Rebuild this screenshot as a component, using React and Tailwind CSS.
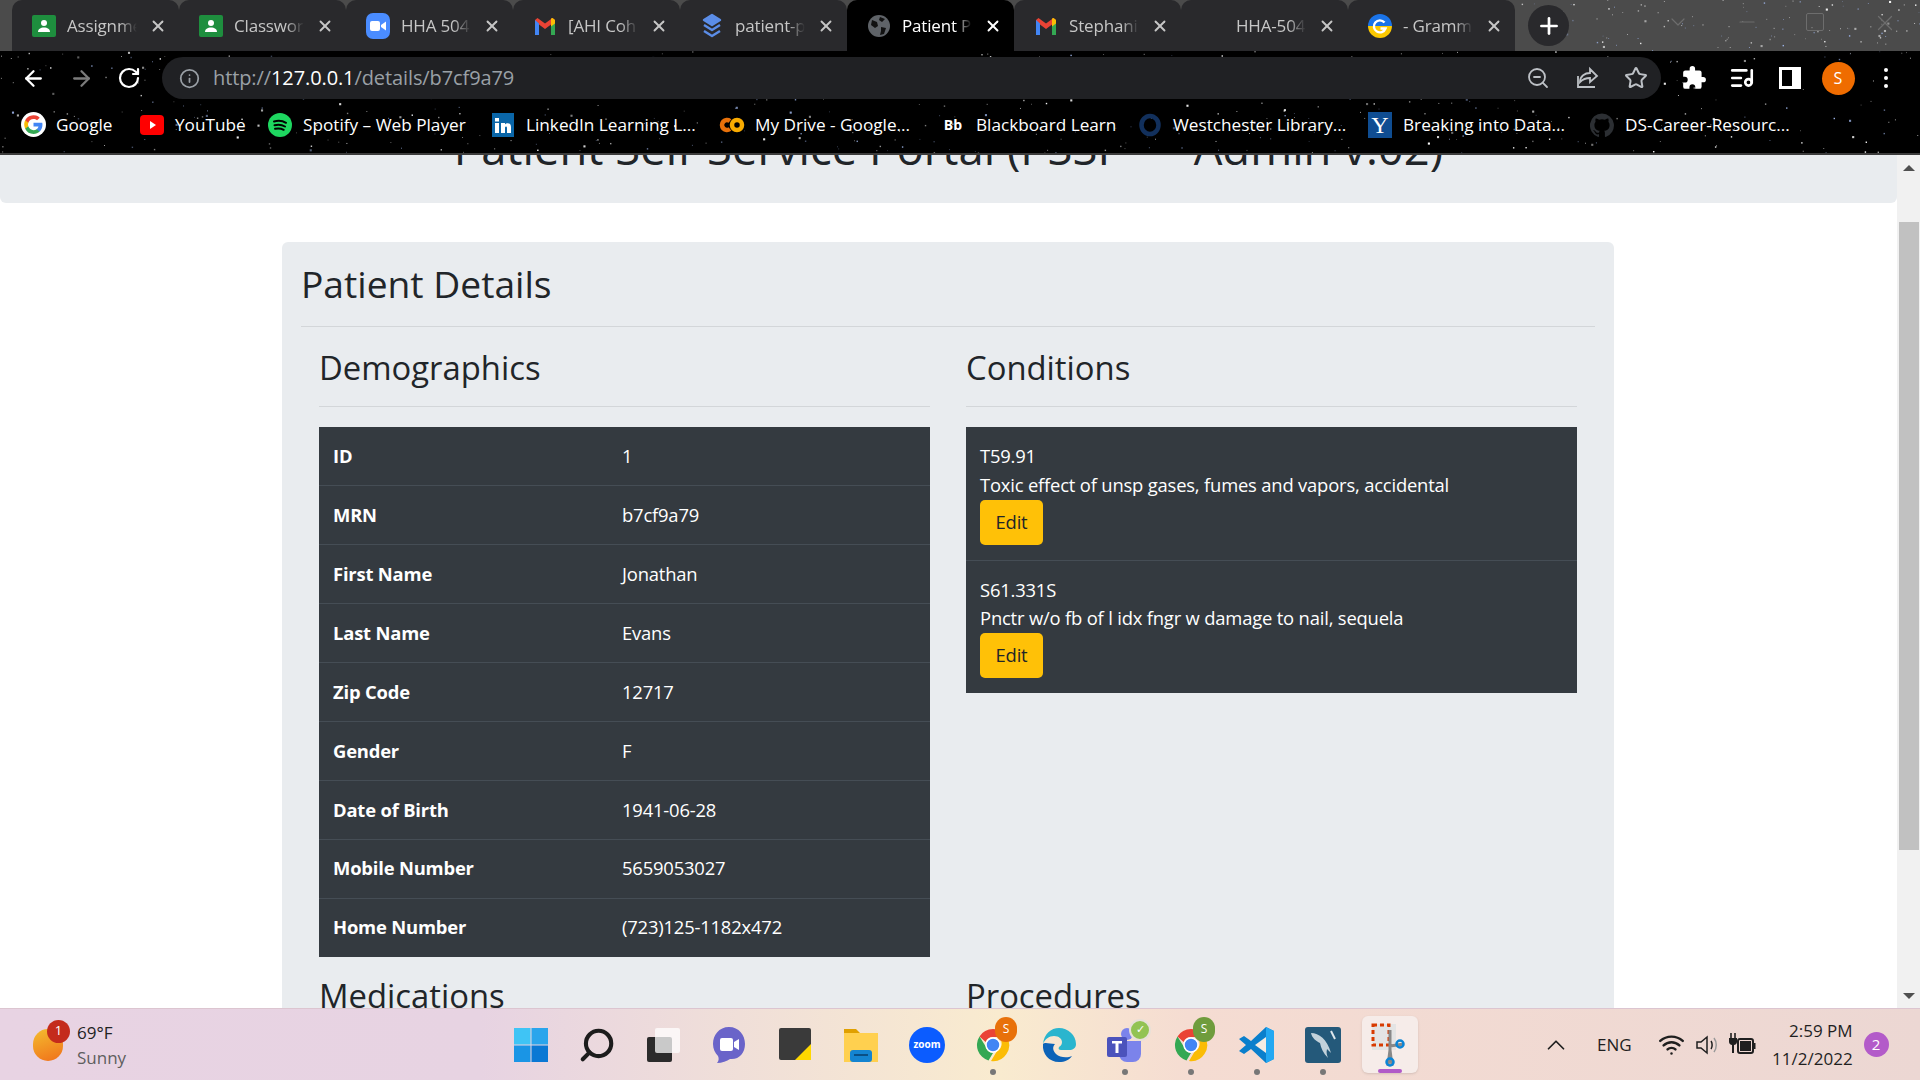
import React from "react";
import { ArrowLeft, ArrowRight, RotateCw, Info, ZoomOut, Star, ListMusic, Plus, X, Minus, ChevronDown, ChevronUp, Search, Wifi } from "lucide-react";

// seeded so the star field is the same on each render
const makeStars = (count, seed, w, h) => {
  let s = seed;
  const next = () => {
    s = (s * 16807) % 2147483647;
    return s / 2147483647;
  };
  const stars = [];
  for (let i = 0; i < count; i++) {
    const x = next() * w;
    const y = next() * h;
    const big = next();
    stars.push({ x, y, r: big > 0.9 ? 1.5 : big > 0.6 ? 1 : 0.6, o: 0.35 + next() * 0.65 });
  }
  return stars;
};

const Stars = ({ count, seed, w, h, className }) => (
  <svg className={className} width={w} height={h} viewBox={`0 0 ${w} ${h}`}>
    {makeStars(count, seed, w, h).map((st, i) => (
      <rect key={i} x={st.x} y={st.y} width={st.r * 1.4} height={st.r * 1.4} fill={i % 3 === 0 ? "#9db4e8" : "#ffffff"} opacity={st.o} />
    ))}
  </svg>
);

const GoogleG = ({ size = 24 }) => (
  <svg width={size} height={size} viewBox="0 0 24 24">
    <circle cx="12" cy="12" r="12" fill="#fff" />
    <path d="M20.6 12.2c0-.6-.1-1.2-.2-1.8H12v3.4h4.8a4.1 4.1 0 0 1-1.8 2.7v2.2h2.9c1.7-1.6 2.7-3.800 2.700-6.500z" fill="#4285F4" />
    <path d="M12 21c2.400 0 4.400-.8 5.900-2.200L15 16.500c-.8.500-1.800.9-3 .9-2.300 0-4.300-1.600-5-3.700H4v2.300A9 9 0 0 0 12 21z" fill="#34A853" />
    <path d="M7 13.700a5.400 5.400 0 0 1 0-3.400V8H4a9 9 0 0 0 0 8z" fill="#FBBC05" />
    <path d="M12 6.600c1.300 0 2.500.5 3.400 1.300L18 5.400A9 9 0 0 0 4 8l3 2.300c.7-2.100 2.700-3.700 5-3.700z" fill="#EA4335" />
  </svg>
);

const Classroom = () => (
  <svg width="24" height="24" viewBox="0 0 24 24">
    <rect x="0" y="1" width="24" height="22" rx="2" fill="#1e8e3e" />
    <circle cx="12" cy="9" r="3" fill="#fff" />
    <path d="M6 18c0-3 2.500-4.500 6-4.500s6 1.500 6 4.500z" fill="#fff" />
  </svg>
);

const ZoomTab = () => (
  <svg width="24" height="28" viewBox="0 0 24 28">
    <rect x="0" y="1" width="24" height="26" rx="7" fill="#4a8cff" />
    <rect x="4" y="9" width="10" height="10" rx="2" fill="#fff" />
    <path d="M15 13l5-3.500v9L15 15z" fill="#fff" />
  </svg>
);

const Gmail = () => (
  <svg width="24" height="24" viewBox="0 0 24 24">
    <path d="M2 21h4V10.500L12 15l6-4.500V21h4V6l-2.500-2L12 9.500 4.500 4 2 6z" fill="#EA4335" />
    <path d="M2 6v15h4V9.500z" fill="#4285F4" />
    <path d="M22 6v15h-4V9.500z" fill="#34A853" />
    <path d="M18 4.500L19.500 4 22 6v3.500l-4 3z" fill="#FBBC05" />
  </svg>
);

const Layers = () => (
  <svg width="20" height="26" viewBox="0 0 20 26" fill="none" stroke="#5b8de8" strokeWidth="2.400" strokeLinejoin="round">
    <path d="M10 2l8 5-8 5-8-5z" fill="#5b8de8" />
    <path d="M2 12l8 5 8-5" />
    <path d="M2 18l8 5 8-5" />
  </svg>
);

const Globe = () => (
  <svg width="24" height="24" viewBox="0 0 24 24">
    <circle cx="12" cy="12" r="11" fill="#5f6368" />
    <path d="M5 6l5 2 1 4-3 2-4-3zM14 13l5 1-2 6-4 1 1-4zM13 3l5 2-3 3-3-2z" fill="#111" />
  </svg>
);

const GrammarlyG = () => (
  <svg width="24" height="24" viewBox="0 0 24 24">
    <path d="M0 12a12 12 0 0 1 24 0z" fill="#1a73e8" />
    <path d="M0 12a12 12 0 0 0 24 0z" fill="#fbc800" />
    <path d="M16.500 8.500a6 6 0 1 0 1 6H12.500" fill="none" stroke="#fff" strokeWidth="2.400" />
  </svg>
);

const tabs = [
  { title: "Assignme", icon: <Classroom /> },
  { title: "Classwork", icon: <Classroom /> },
  { title: "HHA 504", icon: <ZoomTab /> },
  { title: "[AHI Coh", icon: <Gmail /> },
  { title: "patient-p", icon: <Layers /> },
  { title: "Patient P", icon: <Globe />, active: true },
  { title: "Stephani", icon: <Gmail /> },
  { title: "HHA-504", icon: <span className="block h-6 w-6" /> },
  { title: "- Gramm", icon: <GrammarlyG /> },
];

const Tab = ({ title, icon, active }) => (
  <div className={`flex h-[51px] w-[167px] shrink-0 items-center rounded-t-[10px] pl-[20px] pr-[12px] ${active ? "bg-black text-white" : "bg-[#29292c] text-[#c6c6c6]"}`}>
    <span className="flex w-6 shrink-0 justify-center">{icon}</span>
    <span className="ml-[11px] w-[70px] overflow-hidden whitespace-nowrap text-[17px] tracking-[-0.01em] [mask-image:linear-gradient(to_right,black_75%,transparent)]">{title}</span>
    <X className="ml-auto" size={18} strokeWidth={2.5} />
  </div>
);

const bookmarks = [
  { label: "Google", w: "w-[119px]", icon: <GoogleG size={25} /> },
  {
    label: "YouTube",
    w: "w-[128px]",
    icon: (
      <svg width="24" height="24" viewBox="0 0 24 24">
        <rect y="2" width="24" height="20" rx="4" fill="#f00" />
        <path d="M10 8l6 4-6 4z" fill="#fff" />
      </svg>
    ),
  },
  {
    label: "Spotify – Web Player",
    w: "w-[223px]",
    icon: (
      <svg width="24" height="24" viewBox="0 0 24 24" fill="none">
        <circle cx="12" cy="12" r="12" fill="#1ed760" />
        <path d="M6 8.500c4-1 8.500-.8 12 1.300M6.500 12.300c3.500-.8 7.300-.6 10.500 1.200M7 15.800c3-.6 6-.5 8.700 1" stroke="#000" strokeWidth="2" strokeLinecap="round" />
      </svg>
    ),
  },
  {
    label: "LinkedIn Learning L...",
    w: "w-[229px]",
    icon: (
      <svg width="22" height="24" viewBox="0 0 22 24">
        <rect width="22" height="24" fill="#0a66a8" />
        <rect x="3" y="10" width="4" height="10" fill="#fff" />
        <rect x="3" y="5" width="4" height="3.500" fill="#fff" />
        <path d="M9 10h4v1.500c1-1.500 6-2.500 6 2.500v6h-4v-5c0-2-2-2-2 0v5H9z" fill="#fff" />
      </svg>
    ),
  },
  {
    label: "My Drive - Google...",
    w: "w-[221px]",
    icon: (
      <svg width="26" height="24" viewBox="0 0 26 24" fill="none" stroke="#f9ab00" strokeWidth="4.500">
        <path d="M11 8a5 5 0 1 0 0 8" stroke="#e8710a" />
        <circle cx="18" cy="12" r="5" />
      </svg>
    ),
  },
  { label: "Blackboard Learn", w: "w-[197px]", icon: <span className="block w-6 text-center text-[14px] font-bold text-white">Bb</span> },
  {
    label: "Westchester Library...",
    w: "w-[230px]",
    icon: (
      <svg width="24" height="24" viewBox="0 0 24 24" fill="none">
        <ellipse cx="12" cy="12" rx="8.500" ry="9" stroke="#12305c" strokeWidth="4.500" />
      </svg>
    ),
  },
  {
    label: "Breaking into Data...",
    w: "w-[222px]",
    icon: (
      <span className="block h-[26px] w-6 bg-[#0f4d92] text-center font-['Liberation_Serif',serif] text-[24px] leading-[26px] text-white">Y</span>
    ),
  },
  {
    label: "DS-Career-Resourc...",
    w: "w-[230px]",
    icon: (
      <svg width="24" height="24" viewBox="0 0 24 24">
        <path d="M12 .5a12 12 0 0 0-3.800 23.400c.6.100.8-.3.800-.6v-2c-3.300.7-4-1.600-4-1.600-.5-1.400-1.300-1.800-1.300-1.800-1.100-.7.100-.7.100-.7 1.200.1 1.800 1.200 1.800 1.200 1.100 1.800 2.800 1.300 3.500 1 .1-.8.400-1.300.8-1.600-2.700-.3-5.500-1.300-5.500-5.900 0-1.300.5-2.400 1.200-3.200-.1-.3-.5-1.500.1-3.200 0 0 1-.3 3.300 1.200a11.500 11.500 0 0 1 6 0c2.300-1.500 3.300-1.200 3.300-1.200.6 1.700.2 2.900.1 3.200.8.800 1.200 1.900 1.200 3.200 0 4.600-2.800 5.600-5.500 5.900.4.400.8 1.100.8 2.200v3.300c0 .3.200.7.800.6A12 12 0 0 0 12 .5z" fill="#2c2f33" />
      </svg>
    ),
  },
];

const demographics = [
  ["ID", "1"],
  ["MRN", "b7cf9a79"],
  ["First Name", "Jonathan"],
  ["Last Name", "Evans"],
  ["Zip Code", "12717"],
  ["Gender", "F"],
  ["Date of Birth", "1941-06-28"],
  ["Mobile Number", "5659053027"],
  ["Home Number", "(723)125-1182x472"],
];

const conditions = [
  ["T59.91", "Toxic effect of unsp gases, fumes and vapors, accidental"],
  ["S61.331S", "Pnctr w/o fb of l idx fngr w damage to nail, sequela"],
];

const ChromeIcon = ({ badge, badgeColor }) => (
  <span className="relative block h-9 w-9">
    <svg width="36" height="36" viewBox="0 0 36 36">
      <path d="M18 2a16 16 0 0 1 13.900 8H18a8 8 0 0 0-7.400 5L4.500 9.500A16 16 0 0 1 18 2z" fill="#EA4335" />
      <path d="M4.500 9.500L11 20a8 8 0 0 0 7 6l-4.500 7.500A16 16 0 0 1 4.500 9.500z" fill="#34A853" />
      <path d="M31.900 10A16 16 0 0 1 16 34l6-10a8 8 0 0 0 1-14z" fill="#FBBC05" />
      <circle cx="18" cy="18" r="7" fill="#4285F4" stroke="#fff" strokeWidth="1.500" />
    </svg>
    <span className={`absolute -right-[6px] -top-[10px] flex h-[25px] w-[22px] items-center justify-center rounded-full text-[12px] text-white ${badgeColor}`}>{badge}</span>
  </span>
);

const taskIcons = [
  {
    key: "start",
    icon: (
      <svg width="36" height="36" viewBox="0 0 36 36">
        <rect x="1" y="1" width="16.500" height="16.500" fill="#3fc4f5" />
        <rect x="18.500" y="1" width="16.500" height="16.500" fill="#2aa5ec" />
        <rect x="1" y="18.500" width="16.500" height="16.500" fill="#1a95e5" />
        <rect x="18.500" y="18.500" width="16.500" height="16.500" fill="#0a78d4" />
      </svg>
    ),
  },
  { key: "search", icon: <Search className="-scale-x-100" size={38} strokeWidth={2.6} color="#1c1c1c" /> },
  {
    key: "view",
    icon: (
      <svg width="36" height="36" viewBox="0 0 36 36">
        <rect x="2" y="10" width="25" height="25" rx="2" fill="#2b2b2b" />
        <rect x="10" y="1" width="25" height="25" rx="2" fill="#fff" opacity="0.75" />
      </svg>
    ),
  },
  {
    key: "chat",
    icon: (
      <svg width="36" height="38" viewBox="0 0 36 38">
        <path d="M18 1c10 0 16 8 16 17s-6 16-15 15c-3 2-8 4-13 4 2-2 2-5 1-7-3-3-5-7-5-12C2 9 8 1 18 1z" fill="#6a64c9" />
        <rect x="9" y="12" width="13" height="13" rx="2" fill="#fff" />
        <path d="M23 16l5-3v11l-5-3z" fill="#fff" />
      </svg>
    ),
  },
  {
    key: "notes",
    icon: (
      <svg width="32" height="34" viewBox="0 0 32 34">
        <rect width="32" height="32" rx="2" fill="#3a3a3a" />
        <path d="M32 16v16H16z" fill="#ffd800" />
      </svg>
    ),
  },
  {
    key: "files",
    icon: (
      <svg width="36" height="36" viewBox="0 0 36 36">
        <path d="M1 2h12l4 4h18v4H1z" fill="#e0a000" />
        <rect x="1" y="6" width="34" height="29" fill="#ffd04f" />
        <rect x="7" y="23" width="22" height="12" rx="3" fill="#1484d1" />
        <rect x="11" y="27" width="14" height="2" fill="#0a4f85" />
      </svg>
    ),
  },
  {
    key: "zoom",
    icon: (
      <span className="flex h-9 w-9 items-center justify-center rounded-full bg-[#0b5cff] text-[10px] font-bold text-white">zoom</span>
    ),
  },
  { key: "chrome1", icon: <ChromeIcon badge="S" badgeColor="bg-[#e8710a]" />, dot: true },
  {
    key: "edge",
    icon: (
      <svg width="36" height="36" viewBox="0 0 36 36">
        <path d="M2 17C3 7 10 1 18 1c9 0 17 7 17 16 0 4-3 6-7 6h-8c-2 0-3-1-2-3 2-1 3-3 3-5 0-3-3-6-8-6S4 12 2 17z" fill="#2ab5ce" />
        <path d="M2 17c-1 10 6 18 16 18 6 0 10-2 13-6-4 2-12 2-16-2-3-3-4-7-1-10-5 0-10-2-12 0z" fill="#0c63b8" />
      </svg>
    ),
  },
  {
    key: "teams",
    icon: (
      <span className="relative block h-9 w-9">
        <svg width="36" height="36" viewBox="0 0 36 36">
          <circle cx="20" cy="7" r="6" fill="#7b83eb" />
          <path d="M12 14h22v13a8 8 0 0 1-8 8h-6a8 8 0 0 1-8-8z" fill="#7b83eb" />
          <rect x="0" y="10" width="20" height="20" rx="2" fill="#4b53bc" />
          <path d="M5 14h10v2.500h-3.500V26h-3v-9.500H5z" fill="#fff" />
        </svg>
        <span className="absolute -right-[8px] -top-[8px] flex h-[22px] w-[22px] items-center justify-center rounded-full border-2 border-[#e8e0d8] bg-[#92c353] text-[11px] text-white">✓</span>
      </span>
    ),
    dot: true,
  },
  { key: "chrome2", icon: <ChromeIcon badge="S" badgeColor="bg-[#6f9c3d]" />, dot: true },
  {
    key: "vscode",
    icon: (
      <svg width="36" height="38" viewBox="0 0 36 38">
        <path d="M27 1l8 4v28l-8 4-15-14-7 5-5-3 7-6-7-6 5-3 7 5z" fill="#0a7fcc" />
        <path d="M27 1l8 4v28l-8 4z" fill="#23a8f2" />
        <path d="M27 11L16 19l11 8z" fill="#f4ece3" />
      </svg>
    ),
    dot: true,
  },
  {
    key: "mysql",
    icon: (
      <svg width="36" height="36" viewBox="0 0 36 36">
        <rect width="36" height="36" rx="3" fill="#24597a" />
        <path d="M6 6c8 0 16 6 20 20l-4-4c-1 4 0 6 1 9-5-5-7-10-8-15C11 14 7 11 6 6z" fill="#dfe7ec" opacity="0.85" />
        <path d="M26 4l4 8" stroke="#dfe7ec" strokeWidth="2" />
      </svg>
    ),
    dot: true,
  },
];

const App = () => {
  return (
    <div className="flex h-screen w-[1920px] flex-col overflow-hidden bg-white font-['Open_Sans',sans-serif] text-[#212529]">
      {/* browser chrome */}
      <div className="relative h-[51px] shrink-0 bg-[#4b4b4b]">
        <Stars className="absolute left-[1500px] top-0" count={120} seed={71} w={420} h={51} />
        <div className="relative flex items-end pl-[12px]">
          {tabs.map((t) => (
            <Tab key={t.title} {...t} />
          ))}
          <span className="ml-[13px] mt-[5px] flex h-[41px] w-[41px] shrink-0 self-start items-center justify-center rounded-full bg-[#29292c] text-white">
            <Plus size={26} strokeWidth={2.5} />
          </span>
          <div className="flex flex-1 self-start pl-[97px] pt-[10px] text-[#6d6d6d]">
            <ChevronDown className="mr-[45px]" size={24} strokeWidth={1.2} />
            <Minus className="mr-[47px]" size={24} strokeWidth={1.2} />
            <span className="mr-[48px] mt-[3px] block h-[18px] w-[18px] rounded-[2px] border border-[#6d6d6d]" />
            <X size={26} strokeWidth={1.2} />
          </div>
        </div>
      </div>

      <div className="relative h-[102px] shrink-0 bg-black">
        <Stars className="absolute left-0 top-0" count={520} seed={4242} w={1920} h={102} />
        <div className="relative flex h-[54px] items-center pl-[9px] text-white">
          <span className="flex w-[48px] justify-center"><ArrowLeft size={25} strokeWidth={2.2} /></span>
          <span className="flex w-[48px] justify-center"><ArrowRight size={25} strokeWidth={2.2} color="#7b7b7b" /></span>
          <span className="flex w-[48px] justify-center"><RotateCw size={24} strokeWidth={2.2} /></span>
          <div className="ml-[9px] flex h-[42px] w-[1499px] items-center rounded-full bg-[#202124] pl-[17px] pr-[13px]">
            <Info size={21} color="#9aa0a6" strokeWidth={2} />
            <span className="ml-[13px] text-[20px] tracking-[-0.005em] text-[#9aa0a6]">
              http://<span className="text-white">127.0.0.1</span>/details/b7cf9a79
            </span>
            <span className="ml-auto flex items-center gap-[25px] text-[#bdc1c6]">
              <ZoomOut size={24} strokeWidth={1.8} />
              <svg width="24" height="24" viewBox="0 0 24 24" fill="none" stroke="currentColor" strokeWidth="1.800">
                <path d="M3 10v11h17M5 16c0-6 5-9 10-9V3l7 7-7 6v-4c-4 0-7 1-10 4z" />
              </svg>
              <Star size={24} strokeWidth={2} />
            </span>
          </div>
          <span className="ml-[9px] flex w-[48px] justify-center">
            <svg width="26" height="26" viewBox="0 0 24 24" fill="#fff">
              <path d="M20.500 11H19V7a2 2 0 0 0-2-2h-4V3.500a2.500 2.500 0 0 0-5 0V5H4a2 2 0 0 0-2 2v3.800h1.500a2.700 2.700 0 0 1 0 5.400H2V20a2 2 0 0 0 2 2h3.800v-1.500a2.700 2.700 0 0 1 5.400 0V22H17a2 2 0 0 0 2-2v-4h1.500a2.500 2.500 0 0 0 0-5z" />
            </svg>
          </span>
          <span className="flex w-[48px] justify-center"><ListMusic size={26} strokeWidth={2.4} /></span>
          <span className="flex w-[48px] justify-center">
            <span className="flex h-[22px] w-[22px] border-[3px] border-white">
              <span className="block w-[10px] bg-black" />
              <span className="block flex-1 bg-white" />
            </span>
          </span>
          <span className="flex w-[48px] justify-center">
            <span className="flex h-[33px] w-[33px] items-center justify-center rounded-full bg-[#ef6c00] text-[16px] text-white">S</span>
          </span>
          <span className="flex w-[48px] flex-col items-center gap-[4px]">
            <span className="h-[4px] w-[4px] rounded-full bg-white" />
            <span className="h-[4px] w-[4px] rounded-full bg-white" />
            <span className="h-[4px] w-[4px] rounded-full bg-white" />
          </span>
        </div>
        <div className="relative flex h-[48px] items-center pb-[8px] pl-[20px] text-[17.200px] text-white">
          {bookmarks.map((b) => (
            <div key={b.label} className={`flex shrink-0 items-center ${b.w}`}>
              <span className="flex w-[26px] shrink-0 justify-center">{b.icon}</span>
              <span className="ml-[10px] whitespace-nowrap">{b.label}</span>
            </div>
          ))}
        </div>
      </div>
      <div className="h-[2px] shrink-0 bg-[#3c3c3c]" />

      {/* page, scrolled part way down */}
      <div className="flex min-h-0 flex-1">
        <div className="min-w-0 flex-1 overflow-hidden">
          <div className="h-[48px] overflow-hidden rounded-b-[6px] bg-[#e9ecef]">
            <h1 className="-mt-[37px] text-center text-[45.400px] leading-[58px] font-medium whitespace-nowrap">Patient Self-Service Portal (PSSP — Admin v.02)</h1>
          </div>
          <div className="ml-[282px] mt-[39px] w-[1332px] rounded-t-[6px] bg-[#e9ecef] px-[19px] pt-[19px]">
            <h2 className="text-[37.200px] leading-[46px] font-medium">Patient Details</h2>
            <hr className="mt-[19px] border-[#d3d6d9]" />
            <div className="grid grid-cols-[611px_611px] gap-x-[36px] px-[18px]">
              <section>
                <h3 className="mt-[21px] text-[32.800px] leading-[40px] font-medium">Demographics</h3>
                <hr className="mb-[20px] mt-[18px] border-[#d3d6d9]" />
                <table className="w-full border-collapse bg-[#343a40] text-[18.400px] leading-[28.8px] tracking-[-0.01em] text-white">
                  <tbody>
                    {demographics.map(([label, value], i) => (
                      <tr key={label} className={i > 0 ? "border-t border-[#454d55]" : ""}>
                        <th className="w-[289px] px-[14px] py-[14.600px] text-left font-bold">{label}</th>
                        <td className="px-[14px] py-[14.600px]">{value}</td>
                      </tr>
                    ))}
                  </tbody>
                </table>
              </section>
              <section>
                <h3 className="mt-[21px] text-[32.800px] leading-[40px] font-medium">Conditions</h3>
                <hr className="mb-[20px] mt-[18px] border-[#d3d6d9]" />
                <ul className="bg-[#343a40] text-[18.400px] leading-[28.8px] tracking-[-0.01em] text-white">
                  {conditions.map(([code, text], i) => (
                    <li key={code} className={`px-[14px] pb-[15px] pt-[15px] ${i > 0 ? "border-t border-[#454d55]" : ""}`}>
                      <div>{code}</div>
                      <div>{text}</div>
                      <button className="block h-[45px] w-[63px] rounded-[5px] bg-[#ffc107] text-[18.400px] text-[#212529]">Edit</button>
                    </li>
                  ))}
                </ul>
              </section>
              <h3 className="mt-[19px] text-[32.800px] leading-[40px] font-medium">Medications</h3>
              <h3 className="mt-[19px] text-[32.800px] leading-[40px] font-medium">Procedures</h3>
            </div>
          </div>
        </div>
        {/* scrollbar */}
        <div className="flex w-[23px] shrink-0 flex-col items-center bg-[#f1f1f1] pt-[10px]">
          <span className="h-0 w-0 border-x-[6px] border-b-[6px] border-x-transparent border-b-[#505050]" />
          <span className="mt-[51px] h-[628px] w-[20px] bg-[#c1c1c1]" />
          <span className="mt-auto mb-[9px] h-0 w-0 border-x-[6px] border-t-[6px] border-x-transparent border-t-[#505050]" />
        </div>
      </div>

      {/* windows taskbar */}
      <div className="relative flex h-[72px] shrink-0 items-center border-t border-[#dcc5d0] bg-[linear-gradient(90deg,#e8d3e3_0%,#e7d3e2_25%,#f9ebcf_52%,#f5dcd2_62%,#ecd7d3_100%)] text-[#222]">
        <div className="flex w-[498px] shrink-0 items-center pl-[33px]">
          <span className="relative block h-[32px] w-[30px] rounded-full bg-[linear-gradient(160deg,#f4bd2f,#f0701a)]">
            <span className="absolute -right-[7px] -top-[9px] flex h-[23px] w-[23px] items-center justify-center rounded-full bg-[#c42b1c] text-[13px] text-white">1</span>
          </span>
          <div className="ml-[14px] text-[17px] leading-[25px]">
            <div>69°F</div>
            <div className="text-[#5e5e5e]">Sunny</div>
          </div>
        </div>
        <div className="flex items-center">
          {taskIcons.map((t) => (
            <div key={t.key} className="relative flex h-[72px] w-[66px] shrink-0 items-center justify-center">
              {t.icon}
              {t.dot && <span className="absolute bottom-[6px] h-[6px] w-[6px] rounded-full bg-[#777]" />}
            </div>
          ))}
          <div className="relative ml-[6px] flex h-[57px] w-[56px] shrink-0 items-center justify-center rounded-[6px] bg-[#f6ece9] shadow-sm">
            <svg width="40" height="46" viewBox="0 0 40 46" fill="none">
              <rect x="2" y="2" width="24" height="26" fill="#e4e4e4" />
              <rect x="3" y="3" width="16" height="20" stroke="#d83b01" strokeWidth="3" strokeDasharray="4 3" />
              <path d="M20 8v20l-2 16M20 28l2 16M20 24l14-2" stroke="#888" strokeWidth="3" />
              <circle cx="30" cy="22" r="3.500" stroke="#0a84d6" strokeWidth="2.500" />
              <circle cx="20" cy="40" r="3.500" stroke="#0a84d6" strokeWidth="2.500" />
            </svg>
            <span className="absolute bottom-0 h-[4px] w-[24px] rounded-full bg-[#b15ac8]" />
          </div>
        </div>
        <div className="ml-[123px] flex items-center text-[#1f1f1f]">
          <ChevronUp size={30} strokeWidth={1.4} />
          <span className="ml-[26px] text-[17px]">ENG</span>
          <Wifi className="ml-[26px]" size={27} strokeWidth={2.2} />
          <svg className="ml-[9px]" width="26" height="26" viewBox="0 0 26 26" fill="none" stroke="#1f1f1f" strokeWidth="1.500">
            <path d="M3 10h4l6-5v16l-6-5H3z" />
            <path d="M17 9c1.500 2 1.500 6 0 8" />
            <path d="M20 6c3 4 3 10 0 14" stroke="#999" />
          </svg>
          <svg className="ml-[8px]" width="28" height="26" viewBox="0 0 28 26" fill="#1f1f1f">
            <path d="M3 1v5M7 1v5" stroke="#1f1f1f" strokeWidth="1.600" />
            <path d="M1 6h8v4c0 2-2 3-3 3v8H4v-8c-1 0-3-1-3-3z" />
            <rect x="10" y="7" width="15" height="14" rx="2" fill="none" stroke="#1f1f1f" strokeWidth="2" />
            <rect x="12" y="9" width="11" height="10" />
            <rect x="25" y="11" width="2.500" height="6" />
          </svg>
          <div className="ml-[5px] w-[92px] text-right text-[17px] leading-[28px]">
            <div>2:59 PM</div>
            <div>11/2/2022</div>
          </div>
          <span className="ml-[11px] flex h-[25px] w-[25px] items-center justify-center rounded-full bg-[#b35bc9] text-[15px] text-white">2</span>
        </div>
      </div>
    </div>
  );
};

export default App;
